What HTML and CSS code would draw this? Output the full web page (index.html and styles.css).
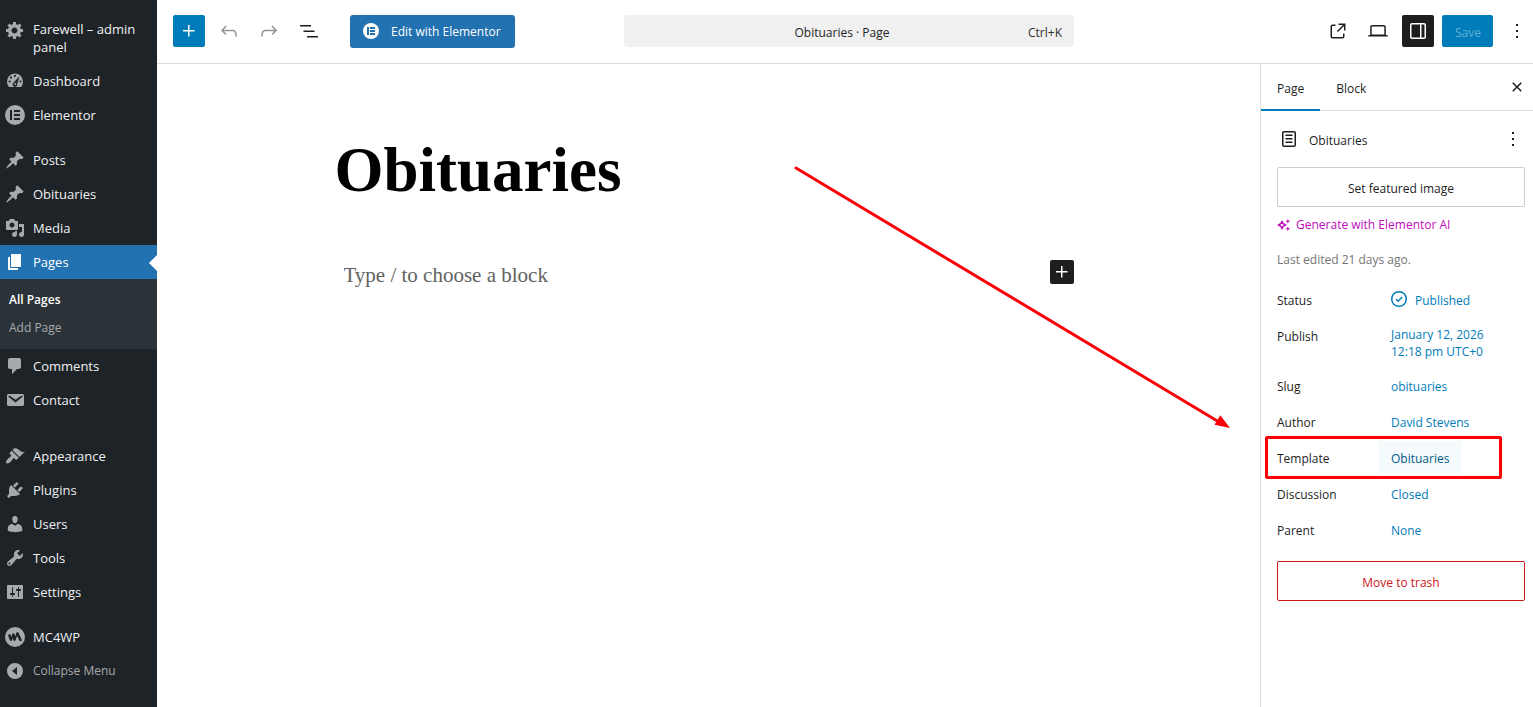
FILE: index.html
```html
<!DOCTYPE html>
<html lang="en">
<head>
<meta charset="utf-8">
<meta name="viewport" content="width=device-width, initial-scale=1">
<title>Edit Page “Obituaries”</title>
<link rel="stylesheet" href="styles.css">
</head>
<body>
<div class="app">
  <nav class="menu" aria-label="Main menu">
    <a class="item item-site" href="#"><svg class="mi" viewBox="0 0 20 20"><path d="M18 12h-2.18c-.17.7-.44 1.35-.81 1.93l1.54 1.54-2.1 2.1-1.54-1.54c-.58.36-1.23.63-1.91.79V19H8v-2.18c-.68-.16-1.33-.43-1.91-.79l-1.54 1.54-2.12-2.12 1.54-1.54c-.36-.58-.63-1.23-.79-1.91H1V9.03h2.17c.16-.7.44-1.35.8-1.94L2.43 5.55l2.1-2.1 1.54 1.54c.58-.37 1.24-.64 1.93-.81V2h3v2.18c.68.16 1.33.43 1.91.79l1.54-1.54 2.12 2.12-1.54 1.54c.36.59.64 1.24.8 1.94H18V12zm-8.5 1.5c1.66 0 3-1.34 3-3s-1.34-3-3-3-3 1.34-3 3 1.34 3 3 3z"/></svg><span>Farewell – admin panel</span></a>
    <a class="item" href="#"><svg class="mi" viewBox="0 0 20 20"><path d="M3.8 16A8.300 8.300 0 0 1 2 10.500a8 8 0 0 1 16 0A8.300 8.300 0 0 1 16.200 16z"/><g fill="#1d2327"><circle cx="10" cy="4.800" r="1.100"/><circle cx="6" cy="6.500" r="1.100"/><circle cx="4.600" cy="10.500" r="1.100"/><circle cx="15.400" cy="10.500" r="1.100"/><path d="M14.500 5.300l-2.300 7.600a2.300 2.300 0 1 1-3.500-1.300z"/></g><circle cx="10.100" cy="13" r="1"/></svg><span>Dashboard</span></a>
    <a class="item" href="#"><svg class="mi" viewBox="0 0 20 20"><circle cx="10" cy="10" r="10"/><path fill="#1d2327" d="M5 5h2v10H5zM9 5h6v2H9zM9 9h6v2H9zM9 13h6v2H9z"/></svg><span>Elementor</span></a>
    <a class="item gap-s" href="#"><svg class="mi" viewBox="0 0 20 20"><path d="M10.440 3.020l1.820-1.820 6.360 6.350-1.830 1.820c-1.050-.68-2.480-.57-3.410.36l-.75.75c-.92.93-1.040 2.350-.35 3.410l-1.830 1.820-2.410-2.410-2.800 2.790c-.42.42-3.380 2.710-3.800 2.290s1.860-3.390 2.280-3.810l2.790-2.790L4.100 9.360l1.830-1.820c1.050.69 2.480.57 3.400-.36l.75-.75c.93-.92 1.050-2.350.36-3.410z"/></svg><span>Posts</span></a>
    <a class="item" href="#"><svg class="mi" viewBox="0 0 20 20"><path d="M10.440 3.020l1.820-1.820 6.360 6.350-1.830 1.820c-1.050-.68-2.480-.57-3.410.36l-.75.75c-.92.93-1.040 2.350-.35 3.410l-1.830 1.820-2.410-2.410-2.800 2.790c-.42.42-3.380 2.710-3.800 2.290s1.860-3.390 2.280-3.810l2.790-2.790L4.100 9.360l1.830-1.820c1.050.69 2.480.57 3.400-.36l.75-.75c.93-.92 1.050-2.350.36-3.410z"/></svg><span>Obituaries</span></a>
    <a class="item" href="#"><svg class="mi" viewBox="0 0 20 20"><path d="M13 11V4c0-.55-.45-1-1-1h-1.670L9 1H5L3.670 3H2c-.55 0-1 .45-1 1v7c0 .55.45 1 1 1h10c.55 0 1-.45 1-1zM7 4.500c1.380 0 2.500 1.120 2.500 2.500S8.380 9.500 7 9.500 4.500 8.380 4.500 7 5.620 4.500 7 4.500zM14 6h5v10.500c0 1.380-1.120 2.500-2.500 2.500S14 17.880 14 16.500s1.120-2.500 2.500-2.500c.17 0 .34.02.5.05V9h-3V6zm-4 8.050V13h2v3.500c0 1.380-1.120 2.500-2.500 2.500S7 17.880 7 16.500 8.120 14 9.500 14c.17 0 .34.02.5.05z"/></svg><span>Media</span></a>
    <a class="item current" href="#" aria-current="page"><svg class="mi" viewBox="0 0 20 20"><path d="M6 15V2h10v13H6zm-1 1h8v2H3V5h2v11z"/></svg><span>Pages</span></a>
    <div class="submenu">
      <a class="sub sub-on" href="#">All Pages</a>
      <a class="sub" href="#">Add Page</a>
    </div>
    <a class="item" href="#"><svg class="mi" viewBox="0 0 20 20"><path d="M5 2h9c1.100 0 2 .9 2 2v7c0 1.100-.9 2-2 2h-2l-5 5v-5H5c-1.100 0-2-.9-2-2V4c0-1.100.9-2 2-2z"/></svg><span>Comments</span></a>
    <a class="item" href="#"><svg class="mi" viewBox="0 0 20 20"><path d="M3.870 4h13.250C18.370 4 19 4.590 19 5.790v8.420c0 1.190-.63 1.790-1.880 1.790H3.870c-1.250 0-1.880-.6-1.880-1.790V5.790c0-1.200.63-1.790 1.880-1.790zm6.620 8.600l6.740-5.530c.24-.2.43-.66.13-1.070-.29-.41-.82-.42-1.170-.17l-5.700 3.860L4.800 5.830c-.35-.25-.88-.24-1.170.17-.3.41-.11.87.13 1.070z"/></svg><span>Contact</span></a>
    <a class="item gap-l" href="#"><svg class="mi" viewBox="0 0 20 20"><path d="M14.480 11.060L7.410 3.990l1.500-1.500c.5-.56 2.300-.47 3.510.32 1.210.8 1.430 1.280 2.910 2.100 1.180.64 2.450 1.260 4.450.85zm-.71.71L6.700 4.700 4.930 6.470c-.39.39-.39 1.020 0 1.410l1.060 1.060c.39.39.39 1.030 0 1.420-.6.6-1.430 1.110-2.210 1.690-.35.26-.7.53-1.010.84C1.430 14.230.4 16.080 1.400 17.070c.99 1 2.840-.03 4.180-1.360.31-.31.58-.66.85-1.020.57-.78 1.080-1.610 1.690-2.210.39-.39 1.020-.39 1.410 0l1.060 1.060c.39.39 1.020.39 1.410 0z"/></svg><span>Appearance</span></a>
    <a class="item" href="#"><svg class="mi" viewBox="0 0 20 20"><path d="M13.110 4.360L9.870 7.600 8 5.730l3.240-3.240c.35-.34 1.050-.2 1.560.32.52.51.66 1.210.31 1.550zm-8 1.770l.91-1.120 9.010 9.010-1.190.84c-.71.71-2.630 1.160-3.820 1.160H6.140L4.900 17.260c-.59.59-1.540.59-2.120 0-.59-.58-.59-1.530 0-2.120l1.240-1.240v-3.880c0-1.130.4-3.190 1.090-3.890zm7.260 3.970l3.240-3.240c.34-.35 1.040-.21 1.550.31.52.51.66 1.210.31 1.550l-3.240 3.250z"/></svg><span>Plugins</span></a>
    <a class="item" href="#"><svg class="mi" viewBox="0 0 20 20"><path d="M10 9.250c-2.270 0-2.730-3.440-2.730-3.440C7 4.020 7.820 2 9.970 2c2.160 0 2.980 2.020 2.710 3.810 0 0-.41 3.440-2.680 3.440zm0 2.570L12.720 10c2.390 0 4.520 2.330 4.520 4.530v2.490s-3.650 1.130-7.240 1.130c-3.650 0-7.240-1.130-7.240-1.130v-2.490c0-2.250 1.940-4.480 4.470-4.480z"/></svg><span>Users</span></a>
    <a class="item" href="#"><svg class="mi" viewBox="0 0 20 20"><path d="M16.680 9.770c-1.340 1.340-3.300 1.670-4.950.99l-5.410 6.520c-.99.99-2.590.99-3.580 0s-.99-2.590 0-3.570l6.520-5.420c-.68-1.650-.35-3.610.99-4.950 1.280-1.280 3.120-1.620 4.720-1.060l-2.890 2.890 2.820 2.820 2.860-2.870c.53 1.580.18 3.390-1.080 4.650zM3.810 16.210c.4.39 1.040.39 1.430 0 .4-.4.4-1.040 0-1.430-.39-.4-1.030-.4-1.430 0-.39.39-.39 1.030 0 1.430z"/></svg><span>Tools</span></a>
    <a class="item" href="#"><svg class="mi" viewBox="0 0 20 20"><path d="M18 16V4c0-.55-.45-1-1-1H3c-.55 0-1 .45-1 1v12c0 .55.45 1 1 1h14c.55 0 1-.45 1-1zM8 11h1c.55 0 1 .45 1 1s-.45 1-1 1H8v1.500c0 .28-.22.5-.5.5s-.5-.22-.5-.5V13H6c-.55 0-1-.45-1-1s.45-1 1-1h1V5.500c0-.28.22-.5.5-.5s.5.22.5.5V11zm5-2h-1c-.55 0-1-.45-1-1s.45-1 1-1h1V5.500c0-.28.22-.5.5-.5s.5.22.5.5V7h1c.55 0 1 .45 1 1s-.45 1-1 1h-1v5.500c0 .28-.22.5-.5.5s-.5-.22-.5-.5V9z"/></svg><span>Settings</span></a>
    <a class="item gap-s" href="#"><svg class="mi" viewBox="0 0 20 20"><circle cx="10" cy="10" r="10"/><path d="M4.500 8.500l1.500 4M8.300 7.800l1.200 4.700M12.500 6.500l3 6.500" fill="none" stroke="#1d2327" stroke-width="2.600" stroke-linecap="round"/><path d="M6 12.500l2.300-4.700M9.500 12.500l3-6" fill="none" stroke="#1d2327" stroke-width="1.800" stroke-linecap="round"/></svg><span>MC4WP</span></a>
    <button class="item collapse" type="button"><svg class="mi" viewBox="0 0 20 20"><path fill-rule="evenodd" d="M10 2a8 8 0 1 0 0 16 8 8 0 0 0 0-16zm2 4v8l-5-4z"/></svg><span>Collapse Menu</span></button>
  </nav>

  <div class="editor">
    <header class="topbar">
      <div class="tools">
        <button class="ib ib-primary" type="button" aria-label="Block inserter"><svg viewBox="0 0 24 24"><path d="M11 12.500V17.500H12.500V12.500H17.500V11H12.500V6H11V11H6V12.500H11Z"/></svg></button>
        <button class="ib ib-muted" type="button" aria-label="Undo"><svg viewBox="0 0 24 24"><path d="M18.300 11.700c-.6-.6-1.400-.9-2.300-.9H6.700l2.900-3.300-1.100-1-4.500 5L8.500 16l1-1-2.700-2.700H16c.5 0 .9.2 1.300.5 1 1 1 3.400 1 4.500v.3h1.500v-.2c0-1.500 0-4.300-1.500-5.700z"/></svg></button>
        <button class="ib ib-muted" type="button" aria-label="Redo"><svg viewBox="0 0 24 24"><path d="M15.600 6.500l-1.100 1 2.900 3.300H8c-.9 0-1.700.3-2.300.9-1.400 1.500-1.400 4.200-1.400 5.600v.2h1.500v-.3c0-1.100 0-3.500 1-4.500.3-.3.7-.5 1.300-.5h9.200L14.500 15l1.100 1.100 4.600-4.600-4.600-5z"/></svg></button>
        <button class="ib" type="button" aria-label="Document overview"><svg viewBox="0 0 24 24"><path d="M3 6h11v1.500H3V6Zm3.500 5.500h11V13h-11v-1.500ZM21 17H10v1.500h11V17Z"/></svg></button>
        <button class="edit-with" type="button"><svg viewBox="0 0 16 16"><circle cx="8" cy="8" r="8" fill="#fff"/><path fill="#2271b1" d="M4 4h2v8H4zM7 4h5v2H7zM7 7h5v2H7zM7 10h5v2H7z"/></svg><span class="btn-text">Edit with Elementor</span></button>
      </div>
      <button class="command" type="button"><span class="cmd-title">Obituaries · Page</span><span class="cmd-key">Ctrl+K</span></button>
      <div class="actions">
        <a class="ib" href="#" aria-label="View page"><svg viewBox="0 0 24 24"><path d="M19.500 4.500h-7V6h4.440l-5.970 5.970 1.060 1.060L18 7.060v4.440h1.500v-7Zm-13 1a2 2 0 0 0-2 2v10a2 2 0 0 0 2 2h10a2 2 0 0 0 2-2v-3H17v3a.5.5 0 0 1-.5.5h-10a.5.5 0 0 1-.5-.5v-10a.5.5 0 0 1 .5-.5h3V5.500h-3Z"/></svg></a>
        <button class="ib" type="button" aria-label="View"><svg viewBox="0 0 24 24"><path d="M20.500 16h-.7V8c0-1.100-.9-2-2-2H6.200c-1.100 0-2 .9-2 2v8h-.7c-.8 0-1.500.7-1.500 1.500h20c0-.8-.7-1.500-1.500-1.500zM5.700 8c0-.3.2-.5.5-.5h11.600c.3 0 .5.2.5.5v7.600H5.700V8z"/></svg></button>
        <button class="ib ib-dark" type="button" aria-label="Settings" aria-pressed="true"><svg viewBox="0 0 24 24"><path d="M18 4H6c-1.100 0-2 .9-2 2v12c0 1.100.9 2 2 2h12c1.100 0 2-.9 2-2V6c0-1.100-.9-2-2-2zm-4 14.500H6c-.3 0-.5-.2-.5-.5V6c0-.3.2-.5.5-.5h8v13zm4.500-.5c0 .3-.2.5-.5.5h-2.500v-13H18c.3 0 .5.2.5.5v12z"/></svg></button>
        <button class="save" type="button">Save</button>
        <button class="ib" type="button" aria-label="Options"><svg viewBox="0 0 24 24"><path d="M13 19h-2v-2h2v2zm0-6h-2v-2h2v2zm0-6h-2V5h2v2z"/></svg></button>
      </div>
    </header>

    <div class="workspace">
      <main class="canvas">
        <h1 class="title">Obituaries</h1>
        <div class="block">
          <input class="block-input" type="text" aria-label="Empty block" placeholder="Type / to choose a block">
          <button class="add" type="button" aria-label="Add block"><svg viewBox="0 0 24 24"><path d="M11 12.500V17.500H12.500V12.500H17.500V11H12.500V6H11V11H6V12.500H11Z"/></svg></button>
        </div>
        <svg class="arrow" viewBox="0 0 444 272" aria-hidden="true"><path d="M7 8L430 262" fill="none" stroke="#fb0007" stroke-width="3" stroke-linecap="round"/><path fill="#fb0007" d="M441 268l-15.500-3.200 5.800-9.600z"/></svg>
      </main>

      <aside class="panel" aria-label="Settings">
        <div class="tabs">
          <button class="tab tab-on" type="button">Page</button>
          <button class="tab" type="button">Block</button>
          <button class="ib close" type="button" aria-label="Close settings"><svg viewBox="0 0 24 24"><path d="M12 13.060l3.712 3.713 1.061-1.060L13.061 12l3.712-3.712-1.060-1.060L12 10.938 8.288 7.227l-1.061 1.060L10.939 12l-3.712 3.712 1.060 1.061L12 13.061z"/></svg></button>
        </div>
        <div class="panel-body">
          <div class="doc">
            <svg class="doc-icon" viewBox="0 0 24 24"><path d="M15.500 7.500h-7V9h7V7.500Zm-7 3.500h7v1.500h-7V11Zm7 3.500h-7V16h7v-1.500Z"/><path fill-rule="evenodd" d="M17 4H7a2 2 0 0 0-2 2v12a2 2 0 0 0 2 2h10a2 2 0 0 0 2-2V6a2 2 0 0 0-2-2ZM7 5.500h10a.5.5 0 0 1 .5.5v12a.5.5 0 0 1-.5.5H7a.5.5 0 0 1-.5-.5V6a.5.5 0 0 1 .5-.5Z"/></svg>
            <h2 class="doc-name">Obituaries</h2>
            <button class="ib ib-small" type="button" aria-label="Actions"><svg viewBox="0 0 24 24"><path d="M13 19h-2v-2h2v2zm0-6h-2v-2h2v2zm0-6h-2V5h2v2z"/></svg></button>
          </div>
          <button class="wide" type="button">Set featured image</button>
          <button class="ai" type="button"><svg viewBox="0 0 14 14"><path d="M5 3.200Q5.600 6.400 8.800 7 5.600 7.600 5 10.800 4.400 7.600 1.200 7 4.400 6.400 5 3.200z" fill="none" stroke="#c00bb9" stroke-width="1.300" stroke-linejoin="round"/><path d="M10.800 1l.7 1.500 1.500.7-1.500.7-.7 1.500-.7-1.500-1.500-.7 1.500-.7zM10.800 8.600l.7 1.500 1.500.7-1.500.7-.7 1.500-.7-1.500-1.500-.7 1.500-.7z" fill="#c00bb9"/></svg>Generate with Elementor AI</button>
          <p class="edited">Last edited 21 days ago.</p>
          <div class="rows">
            <div class="row"><span class="label">Status</span><button class="value status" type="button"><svg viewBox="0 0 24 24"><circle cx="12" cy="12" r="7.300" fill="none" stroke="currentColor" stroke-width="1.500"/><path d="M9 12.200l2.100 2 4-4.300" fill="none" stroke="currentColor" stroke-width="1.500"/></svg><span class="btn-text">Published</span></button></div>
            <div class="row"><span class="label">Publish</span><button class="value" type="button">January 12, 2026<br>12:18 pm UTC+0</button></div>
            <div class="row"><span class="label">Slug</span><button class="value" type="button">obituaries</button></div>
            <div class="row"><span class="label">Author</span><button class="value" type="button">David Stevens</button></div>
            <div class="row marked"><span class="label">Template</span><button class="value value-on" type="button">Obituaries</button></div>
            <div class="row"><span class="label">Discussion</span><button class="value" type="button">Closed</button></div>
            <div class="row"><span class="label">Parent</span><button class="value" type="button">None</button></div>
          </div>
          <button class="wide wide-danger" type="button">Move to trash</button>
        </div>
      </aside>
    </div>
  </div>
</div>
</body>
</html>
```
FILE: styles.css
```css
* { box-sizing: border-box; }

body {
  margin: 0;
  background: #fff;
  color: #1e1e1e;
  font: 12px/20px "Open Sans", "Noto Sans", sans-serif;
}

button, input { font: inherit; color: inherit; margin: 0; }
button { padding: 0; border: 0; background: none; cursor: pointer; }
a { color: inherit; text-decoration: none; }
svg { display: block; flex: none; fill: currentColor; }
h1, h2, p { margin: 0; }

.app { display: flex; min-height: 100vh; }

/* Admin menu */
.menu {
  display: flex;
  flex-direction: column;
  flex: none;
  width: 157px;
  padding-top: 12px;
  background: #1d2327;
  color: #f0f0f1;
  font-size: 13px;
  line-height: 18px;
}
.item {
  position: relative;
  display: flex;
  align-items: center;
  gap: 8px;
  min-height: 34px;
  padding: 0 5px;
  text-align: left;
}
.item-site { align-items: flex-start; min-height: 52px; padding-top: 8px; }
.mi { width: 20px; height: 20px; color: #a7aaad; }
.gap-s { margin-top: 11px; }
.gap-l { margin-top: 22px; }
.current { background: #2271b1; color: #fff; }
.current .mi { color: #fff; }
.current::after {
  content: "";
  position: absolute;
  top: 10px;
  right: 0;
  border: solid transparent;
  border-width: 8px 8px 8px 0;
  border-right-color: #fff;
}
.submenu { padding: 7px 0; background: #2c3338; font-size: 12px; }
.sub { display: block; padding: 5px 9px; color: #a7aaad; }
.sub-on { color: #fff; font-weight: 600; }
.collapse { color: #a7aaad; font-size: 12px; }

/* Editor header */
.editor { display: flex; flex: 1; flex-direction: column; min-width: 0; }
.topbar {
  display: grid;
  grid-template-columns: 1fr minmax(0, 450px) 1fr;
  align-items: center;
  height: 64px;
  padding: 0 0 1px 8px;
  border-bottom: 1px solid #ddd;
}
.tools, .actions { display: flex; align-items: center; gap: 8px; }
.tools { padding-left: 8px; }
.actions { justify-content: flex-end; }
.ib {
  display: flex;
  align-items: center;
  justify-content: center;
  width: 32px;
  height: 32px;
  border-radius: 2px;
}
.ib svg { width: 24px; height: 24px; }
.ib-primary { background: #007cba; color: #fff; }
.ib-muted { color: #949494; }
.ib-dark { background: #1e1e1e; color: #fff; }
.btn-text { padding-top: 2px; }
.edit-with {
  display: flex;
  align-items: center;
  gap: 12px;
  height: 33px;
  margin-left: 17px;
  padding: 0 14px 0 13px;
  border-radius: 3px;
  background: #2271b1;
  color: #fff;
  white-space: nowrap;
}
.edit-with svg { width: 16px; height: 16px; }
.command {
  display: flex;
  align-items: center;
  height: 32px;
  padding: 3px 12px 0 32px;
  border-radius: 4px;
  background: #f0f0f0;
}
.cmd-title { flex: 1; text-align: center; }
.cmd-key { color: #2f2f2f; }
.save {
  height: 32px;
  padding: 3px 12px 0 13px;
  border-radius: 2px;
  background: #007cba;
  color: #66b0d6;
}

/* Canvas */
.workspace { display: flex; flex: 1; }
.canvas {
  position: relative;
  flex: 1;
  min-width: 0;
  padding: 64px 24px;
  font-family: "Liberation Serif", serif;
}
.title {
  max-width: 748px;
  margin: 0 auto;
  color: #000;
  font-size: 63px;
  line-height: 84px;
}
.block {
  display: flex;
  align-items: center;
  max-width: 730px;
  margin: 44px auto 0;
}
.block-input {
  flex: 1;
  min-width: 0;
  height: 32px;
  padding: 6px 0 0;
  border: 0;
  outline: 0;
  background: none;
  font-size: 21px;
}
.block-input::placeholder { color: #626262; opacity: 1; }
.add { border-radius: 2px; background: #1e1e1e; color: #fff; }
.add svg { width: 24px; height: 24px; }
.arrow {
  position: absolute;
  top: 96px;
  right: 27px;
  width: 444px;
  height: 272px;
  pointer-events: none;
}

/* Settings panel */
.panel { flex: none; width: 273px; border-left: 1px solid #ddd; }
.tabs { display: flex; height: 47px; border-bottom: 1px solid #ddd; }
.tab { height: 47px; padding: 2px 16px 0; }
.tab-on { padding-top: 4px; border-bottom: 2px solid #007cba; }
.close { height: 46px; margin-left: auto; }
.panel-body { display: flex; flex-direction: column; padding: 16px 8px 16px 16px; }
.doc { display: flex; align-items: center; gap: 8px; min-height: 24px; }
.doc-icon { width: 24px; height: 24px; }
.doc-name { flex: 1; padding-top: 3px; font-size: 12px; font-weight: 400; }
.ib-small { width: 24px; height: 24px; }
.wide {
  height: 40px;
  margin-top: 16px;
  padding-top: 3px;
  border: 1px solid #ccc;
  border-radius: 2px;
}
.wide-danger { border-color: #cc1818; color: #cc1818; }
.ai {
  display: flex;
  align-items: center;
  gap: 5px;
  margin-top: 8px;
  color: #c00bb9;
}
.ai svg { width: 14px; height: 14px; }
.edited { margin-top: 15px; color: #757575; }
.rows { display: grid; gap: 4px; margin-top: 13px; }
.row {
  position: relative;
  display: grid;
  grid-template-columns: 102px 1fr;
  align-items: start;
}
.label { padding: 8px 0 4px; }
.value {
  justify-self: start;
  min-height: 32px;
  padding: 7px 12px 5px;
  border-radius: 2px;
  color: #007cba;
  line-height: 17px;
  text-align: left;
}
.value-on { background: #f5fafc; color: #005a87; }
.status { display: flex; align-items: center; gap: 4px; padding: 0 8px; }
.status svg { width: 24px; height: 24px; }
.marked::after {
  content: "";
  position: absolute;
  inset: -5px 23px -6px -12px;
  border: 3px solid #fb0007;
  border-radius: 2px;
  pointer-events: none;
}
```
